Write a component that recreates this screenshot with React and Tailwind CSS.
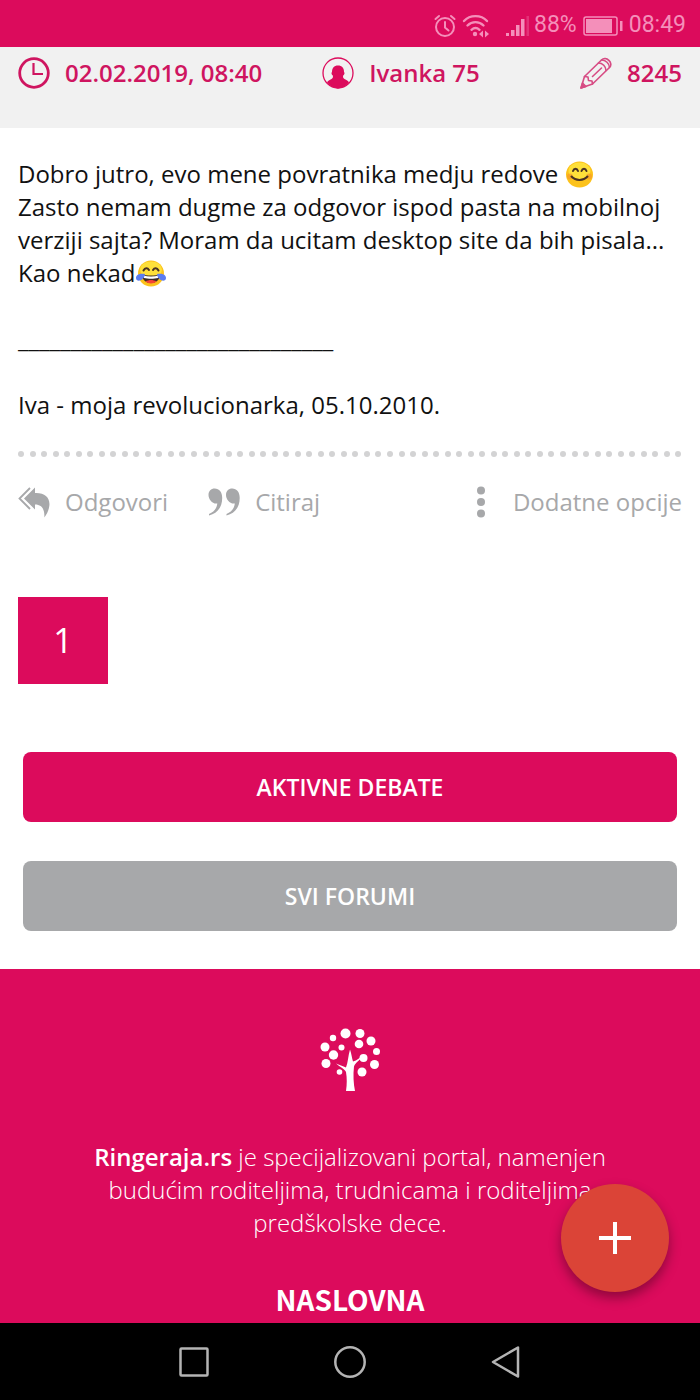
const DOT_COUNT = 58

function StatusBar() {
  return (
    <div className="flex h-[47px] items-center justify-end bg-[#dc0b5c] pt-1 pr-3.5 font-[Roboto,sans-serif] text-[23px] text-[#f48fba]">
      <svg width="22" height="24" viewBox="0 0 22 24" fill="none" stroke="currentColor" strokeWidth="2" strokeLinecap="round">
        <circle cx="11" cy="13" r="9" />
        <path d="M11 8v5.500l3.500 3M1.500 5 5 2M20.500 5 17 2" />
      </svg>
      <svg className="ml-1.5" width="28" height="24" viewBox="0 0 28 24" fill="none" stroke="currentColor" strokeWidth="2.400" strokeLinecap="round">
        <path d="M2 7c6-6.500 17-6.500 23 0M5.500 11.500c4.500-4.500 11.500-4.500 16 0M9.500 15.800c2.500-2.300 5.500-2.300 8 0" />
        <circle cx="13" cy="20" r="2.200" fill="currentColor" stroke="none" />
        <path d="m21 16.500-4 3.500 4 3.500zM23 16.500l4 3.500-4 3.500z" fill="currentColor" stroke="none" />
      </svg>
      <svg className="ml-4" width="24" height="22" viewBox="0 0 24 22" fill="currentColor">
        <path d="M0 18h3v3H0zM5 15h3.500v6H5zM10 10h3.500v11H10zM15 4h3.500v17H15z" />
        <path d="M20.500 1H23v20h-2.500z" opacity=".3" />
      </svg>
      <span className="ml-1">88%</span>
      <svg className="ml-1.5" width="40" height="20" viewBox="0 0 40 20" fill="none">
        <rect x="1" y="1" width="33" height="18" rx="2" stroke="currentColor" strokeWidth="1.500" />
        <path d="M3 3h26v14H3z" fill="currentColor" />
        <path d="M37 5h2.500v10H37z" fill="currentColor" />
      </svg>
      <span className="ml-1.5">08:49</span>
    </div>
  )
}

function ClockIcon() {
  return (
    <svg width="32" height="32" viewBox="0 0 32 32" fill="none" stroke="currentColor">
      <circle cx="16" cy="16" r="14.300" strokeWidth="2.800" />
      <path d="M15.500 6v11H25" strokeWidth="2.200" />
    </svg>
  )
}

function UserIcon() {
  return (
    <svg width="32" height="32" viewBox="0 0 32 32" fill="none" className="text-[#dc0b5c]">
      <circle cx="16" cy="16" r="15" stroke="currentColor" strokeWidth="1.300" />
      <path
        d="M16 8.500c4 0 6 2.500 6 6.500 1 .5.500 3-.8 3.500-.4 1.500-.2 2.500 1.300 3.500 2 1 3.600 1.600 4.500 3.600A15.500 15.500 0 0 1 16 31.500 15.500 15.500 0 0 1 5 25.600c.9-2 2.500-2.600 4.500-3.600 1.500-1 1.700-2 1.300-3.500C9.500 18 9 15.500 10 15c0-4 2-6.500 6-6.500z"
        fill="currentColor"
      />
    </svg>
  )
}

function PencilIcon() {
  return (
    <svg width="32" height="32" viewBox="0 0 32 32" fill="none" stroke="currentColor" strokeWidth="1.600" strokeLinejoin="round" strokeLinecap="round" opacity=".75">
      <path d="M1 31 4.500 19.500 21.500 3C26-1.500 34 6 29.500 10.500L12.500 27z" />
      <path d="M4.500 19.500l3.500.5.500 3.500 3.500.5.500 3M21.500 3c4 0 8 3.500 8 7.500M18.500 6c4 0 7.500 3.500 7.500 7.500M12.500 19.500l9-8.500" />
      <path d="M1 31l1.500-5 3.500 3.500z" fill="currentColor" />
    </svg>
  )
}

function ReplyAllIcon() {
  return (
    <svg width="32" height="32" viewBox="0 0 32 32" fill="currentColor">
      <path d="M6 12.500 17 1.500v5.500C27 6.500 32.500 12 31.300 20c-.6 4.500-2.300 8-5 11.500C26.800 25 25 18.500 17 18.500v5z" />
      <path d="M12 2 1.500 12.500 12 23" fill="none" stroke="currentColor" strokeWidth="1.800" />
    </svg>
  )
}

function QuoteIcon() {
  return (
    <svg width="32" height="32" viewBox="0 0 32 32" fill="currentColor">
      <path d="M.5 9c0-4 2.500-6.500 6.200-6.500 4.500 0 7.500 3.500 7.500 9.500 0 9-4.700 15.500-13.200 17.500V28c5-2 7.800-5.500 8.300-10.500C4.500 18.300.5 13.500.5 9z" />
      <path d="M18 9c0-4 2.500-6.500 6.200-6.500 4.500 0 7.500 3.500 7.500 9.500 0 9-4.700 15.500-13.200 17.500V28c5-2 7.800-5.500 8.300-10.500C22 18.300 18 13.500 18 9z" />
    </svg>
  )
}

function DotsIcon() {
  return (
    <svg width="8" height="32" viewBox="0 0 8 32" fill="currentColor">
      <circle cx="4" cy="4.500" r="4" />
      <circle cx="4" cy="16" r="4" />
      <circle cx="4" cy="27.500" r="4" />
    </svg>
  )
}

function SmileEmoji() {
  return (
    <svg role="img" aria-label="smile" className="inline-block align-[-5px]" width="29" height="27" viewBox="0 0 29 27" fill="none">
      <ellipse cx="14.500" cy="13.500" rx="13.500" ry="13" fill="#fcc21b" />
      <ellipse cx="14.500" cy="10" rx="11" ry="8.500" fill="#fee03a" />
      <circle cx="5" cy="15.500" r="3" fill="#f79329" opacity=".6" />
      <circle cx="24" cy="15.500" r="3" fill="#f79329" opacity=".6" />
      <path d="M8 10c1-3 4-3 5 0M16.500 10c1-3 4-3 5 0M6.500 15.500c4 4.500 12 4.500 16 0" stroke="#4a3222" strokeWidth="2" strokeLinecap="round" />
    </svg>
  )
}

function JoyEmoji() {
  return (
    <svg role="img" aria-label="joy" className="inline-block align-[-5px]" width="30" height="27" viewBox="0 0 30 27" fill="none">
      <ellipse cx="15" cy="13.500" rx="13" ry="13" fill="#fcc21b" />
      <ellipse cx="15" cy="9.500" rx="11" ry="8" fill="#fee03a" />
      <path d="M7.500 10.500c1.500-3 4-3 5.500-.5M17 10c1.500-2.500 4-2.500 5.500.5" stroke="#4a3222" strokeWidth="2" strokeLinecap="round" />
      <path d="M6 14c5 2 13 2 18 0 0 6-4 9-9 9s-9-3-9-9z" fill="#3b2a24" />
      <path d="M7 15.300c5 1.700 11 1.700 16 0l-1 2.700c-4 1-10 1-14 0z" fill="#fff" />
      <path d="M9.500 21.500c3-2 8-2 11 0-3 2.600-8 2.600-11 0z" fill="#f44336" />
      <path d="M9 14C4 13 0 14.500 0 18c0 4.500 8 3.500 9-4zM21 14c5-1 9 .5 9 4 0 4.500-8 3.500-9-4z" fill="#5b7cf0" />
    </svg>
  )
}

function TreeLogo() {
  return (
    <svg width="60" height="64" viewBox="0 0 60 64" fill="#fff">
      <path d="M26 63c1-7 1-13 0-19-1-3-6-5-10-8.500 3 1 7 3 10 4 2-5 2-11 4-18 1.500 4 2 9 3 12 4-1 7-4 11-7-3 5-9 8-10 12-1 8-.5 17 1 24.500z" />
      <circle cx="25.500" cy="5.500" r="5" />
      <circle cx="40" cy="5.500" r="4.500" />
      <circle cx="13" cy="10" r="3.200" />
      <circle cx="51" cy="13" r="4.500" />
      <circle cx="39" cy="16" r="4.300" />
      <circle cx="5" cy="19" r="4.500" />
      <circle cx="21.500" cy="19.500" r="3" />
      <circle cx="56.500" cy="23.500" r="3.500" />
      <circle cx="13.500" cy="27" r="4.700" />
      <circle cx="43.500" cy="30" r="4" />
      <circle cx="6" cy="35.500" r="4.500" />
      <circle cx="54.500" cy="36.500" r="4.500" />
      <circle cx="19.500" cy="44" r="2.800" />
      <circle cx="42" cy="44" r="4.500" />
    </svg>
  )
}

function PostHeader() {
  return (
    <header className="flex h-[81px] items-start bg-[#f1f1f1] px-[18px] pt-2.5 text-[24px] leading-8 font-semibold text-[#cf1560]">
      <div className="mr-[60px] flex items-center gap-[15px]">
        <ClockIcon />
        <time dateTime="2019-02-02T08:40">02.02.2019, 08:40</time>
      </div>
      <a href="#profile" className="flex items-center gap-[15px]">
        <UserIcon />
        Ivanka 75
      </a>
      <div className="ml-auto flex items-center gap-[15px]">
        <PencilIcon />
        <span>8245</span>
      </div>
    </header>
  )
}

function PostBody() {
  return (
    <article className="px-[18px] pt-[29px] text-[24px] leading-[33px] text-[#111]">
      <p>
        Dobro jutro, evo mene povratnika medju redove <SmileEmoji />
        <br />
        Zasto nemam dugme za odgovor ispod pasta na mobilnoj
        <br />
        verziji sajta? Moram da ucitam desktop site da bih pisala...
        <br />
        Kao nekad
        <JoyEmoji />
      </p>
      <p className="mt-[33px]">______________________________</p>
      <p className="mt-[33px]">Iva - moja revolucionarka, 05.10.2010.</p>
    </article>
  )
}

function PostActions() {
  return (
    <div className="px-[18px]">
      <div className="mt-[30px] flex justify-between">
        {Array.from({ length: DOT_COUNT }, (_, i) => (
          <span key={i} className="size-1.5 rounded-full bg-[#d3d3d4]" />
        ))}
      </div>
      <div className="mt-[29px] flex text-[24px] leading-8 text-[#a7a8aa]">
        <button type="button" className="flex items-center gap-[15px]">
          <ReplyAllIcon />
          Odgovori
        </button>
        <button type="button" className="ml-10 flex items-center gap-[15px]">
          <QuoteIcon />
          Citiraj
        </button>
        <button type="button" className="ml-auto flex items-center gap-[28px]">
          <DotsIcon />
          Dodatne opcije
        </button>
      </div>
    </div>
  )
}

function Footer() {
  return (
    <footer className="relative mt-[38px] flex grow flex-col items-center bg-[#dc0b5c] px-16 pt-[59px] text-center text-white">
      <TreeLogo />
      <p className="mt-12 max-w-[560px] text-[24px] leading-[33px] font-light">
        <strong className="font-semibold">Ringeraja.rs</strong> je specijalizovani portal, namenjen budućim roditeljima, trudnicama i roditeljima predškolske dece.
      </p>
      <a href="#naslovna" className="mt-11 font-['Noto_Sans_CJK_SC',sans-serif] text-[28px] leading-[33px] font-bold">
        NASLOVNA
      </a>
      <button
        type="button"
        aria-label="Dodaj"
        className="absolute right-[31px] bottom-[31px] flex size-[108px] items-center justify-center rounded-full bg-[#db4437] shadow-[0_6px_12px_rgba(0,0,0,0.35)]"
      >
        <svg width="32" height="32" viewBox="0 0 32 32" stroke="#fff" strokeWidth="4">
          <path d="M16 0v32M0 16h32" />
        </svg>
      </button>
    </footer>
  )
}

function NavBar() {
  return (
    <nav className="flex h-[77px] items-center justify-center gap-[124px] bg-black text-[#b4b4b4]">
      <button type="button" aria-label="Recent apps">
        <svg width="32" height="32" viewBox="0 0 32 32" fill="none" stroke="currentColor" strokeWidth="2.500">
          <rect x="2.500" y="2.500" width="27" height="27" rx="1" />
        </svg>
      </button>
      <button type="button" aria-label="Home">
        <svg width="32" height="32" viewBox="0 0 32 32" fill="none" stroke="currentColor" strokeWidth="2.500">
          <circle cx="16" cy="16" r="14.700" />
        </svg>
      </button>
      <button type="button" aria-label="Back">
        <svg width="32" height="32" viewBox="0 0 32 32" fill="none" stroke="currentColor" strokeWidth="2.500" strokeLinejoin="round">
          <path d="M28 1.500v29L3 16z" />
        </svg>
      </button>
    </nav>
  )
}

export default function App() {
  return (
    <div className="flex min-h-screen flex-col bg-white font-['Open_Sans',sans-serif]">
      <StatusBar />
      <PostHeader />
      <main>
        <PostBody />
        <PostActions />
        <div className="mt-[79px] px-[18px]">
          <button type="button" aria-current="page" className="h-[87px] w-[90px] bg-[#dc0b5c] text-[34px] text-white">
            1
          </button>
        </div>
        <div className="mt-[68px] flex flex-col gap-[39px] px-[23px] text-[23px] font-semibold text-white">
          <button type="button" className="h-[70px] rounded-lg bg-[#dc0b5c]">
            AKTIVNE DEBATE
          </button>
          <button type="button" className="h-[70px] rounded-lg bg-[#a7a8aa]">
            SVI FORUMI
          </button>
        </div>
      </main>
      <Footer />
      <NavBar />
    </div>
  )
}
